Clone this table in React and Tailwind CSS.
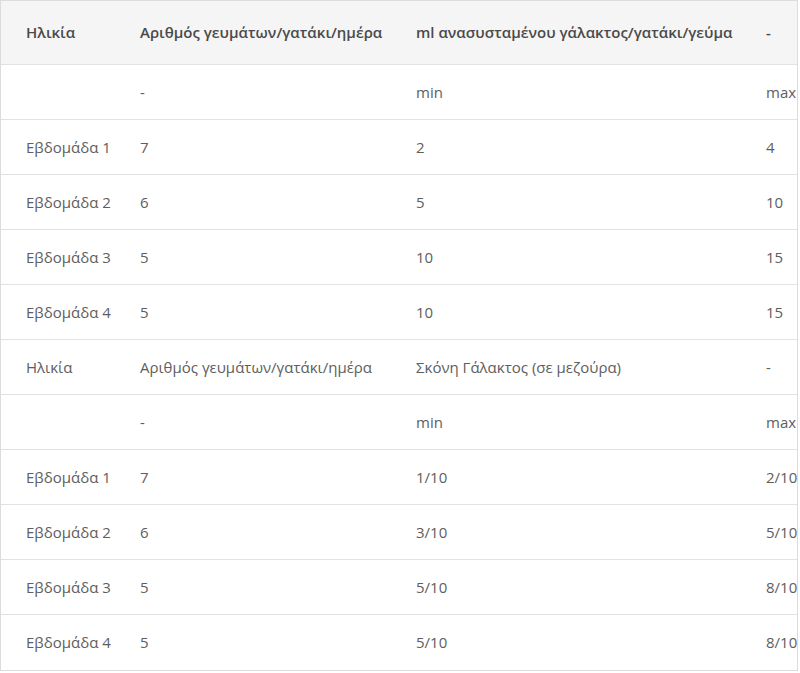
const rows1 = [
  ['', '-', 'min', 'max'],
  ['Εβδομάδα 1', '7', '2', '4'],
  ['Εβδομάδα 2', '6', '5', '10'],
  ['Εβδομάδα 3', '5', '10', '15'],
  ['Εβδομάδα 4', '5', '10', '15'],
];

const rows2 = [
  ['Ηλικία', 'Αριθμός γευμάτων/γατάκι/ημέρα', 'Σκόνη Γάλακτος (σε μεζούρα)', '-'],
  ['', '-', 'min', 'max'],
  ['Εβδομάδα 1', '7', '1/10', '2/10'],
  ['Εβδομάδα 2', '6', '3/10', '5/10'],
  ['Εβδομάδα 3', '5', '5/10', '8/10'],
  ['Εβδομάδα 4', '5', '5/10', '8/10'],
];

function Row({ cells, last }) {
  return (
    <div
      className={`grid grid-cols-[114px_276px_350px_56px] items-center h-[55px] ${
        last ? '' : 'border-b border-[#e2e2e2]'
      }`}
    >
      {cells.map((c, i) => (
        <div key={i} className="pl-[25px] whitespace-nowrap">
          {c}
        </div>
      ))}
    </div>
  );
}

export default function App() {
  const all = [...rows1, ...rows2];

  return (
    <div className="bg-white w-[800px] h-[673px] overflow-hidden">
      <div
        className="w-[798px] border border-[#dcdcdc] text-[15px] text-[#5e5e5e]"
        style={{ fontFamily: '"Open Sans", "Noto Sans", sans-serif' }}
      >
        <div className="grid grid-cols-[114px_276px_350px_56px] items-center h-[64px] bg-[#f5f5f5] border-b border-[#e2e2e2] font-semibold text-[#4a4a4a]">
          <div className="pl-[25px]">Ηλικία</div>
          <div className="pl-[25px] whitespace-nowrap">Αριθμός γευμάτων/γατάκι/ημέρα</div>
          <div className="pl-[25px] whitespace-nowrap">ml ανασυσταμένου γάλακτος/γατάκι/γεύμα</div>
          <div className="pl-[25px]">-</div>
        </div>
        {all.map((r, i) => (
          <Row key={i} cells={r} last={i === all.length - 1} />
        ))}
      </div>
    </div>
  );
}
